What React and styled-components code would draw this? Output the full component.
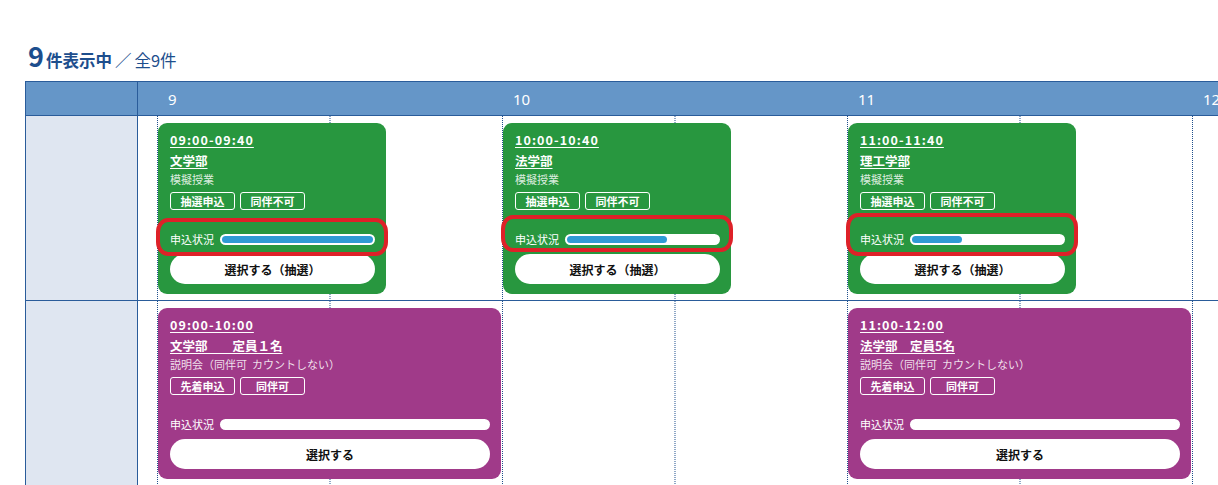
import React from 'react'
import styled, { createGlobalStyle } from 'styled-components'

const NAVY = '#2a5c9a'
const SLOT = 57.5 // 10 minutes

const GlobalStyle = createGlobalStyle`
  body {
    margin: 0;
    background: #fff;
    font-family: "Noto Sans CJK JP", "Noto Sans", sans-serif;
    overflow: hidden;
  }
`

const Page = styled.div`
  padding: 39px 0 0 25px;
`

const Title = styled.h2`
  margin: 0 0 4px 3px;
  color: #1d4e8d;
  font-weight: 400;
  font-size: 16.5px;
  line-height: 33px;
  display: flex;
  align-items: baseline;
`
const Count = styled.span`
  font-size: 27px;
  font-weight: 700;
  margin-right: 2px;
`
const Bold = styled.span`
  font-weight: 700;
`
const Slash = styled.span`
  margin: 0 3px 0 3px;
`

const Table = styled.div`
  display: grid;
  grid-template-columns: 112px 1fr;
  border-top: 1px solid ${NAVY};
  border-left: 1px solid ${NAVY};
`

const LeftCell = styled.div`
  background: ${p => (p.$head ? '#6596c8' : '#dfe6f1')};
  border-right: 1px solid ${NAVY};
  border-bottom: 1px solid ${NAVY};
`

const HeadTimes = styled.div`
  display: flex;
  height: 33px;
  align-items: center;
  padding-left: 30px;
  background: #6596c8;
  border-bottom: 1px solid ${NAVY};
  overflow: hidden;
`
const Hour = styled.div`
  flex: 0 0 345px;
  color: #fff;
  font-family: "Noto Sans", sans-serif;
  font-size: 15px;
`

// timeline body: dotted rule every half hour, 10 minute grid underneath
const Lane = styled.div`
  display: grid;
  grid-template-columns: 19px repeat(30, ${SLOT}px);
  align-items: start;
  border-bottom: 1px solid ${NAVY};
  background-image: conic-gradient(at 1px 1px, transparent 75%, #1f4f8c 0);
  background-size: ${SLOT * 3}px 2px;
  background-position: 19px 0;
  min-height: ${p => p.$h}px;
  overflow: hidden;
`

const Card = styled.div`
  grid-row: 1;
  grid-column: ${p => p.$start} / span ${p => p.$span};
  margin: 7px 1px 6px 1px;
  background: ${p => (p.$tone === 'purple' ? '#a03a89' : '#28973f')};
  border-radius: 9px;
  padding: 7px 11px 10px 12px;
  color: #fff;
  display: flex;
  flex-direction: column;
`

const Time = styled.div`
  font-size: 12.5px;
  font-weight: 700;
  letter-spacing: 1.1px;
  line-height: 20px;
  text-decoration: underline;
  text-underline-offset: 2px;
  align-self: flex-start;
`
const Name = styled.div`
  margin-top: 1px;
  font-size: 12.5px;
  font-weight: 700;
  line-height: 20px;
  text-decoration: underline;
  text-underline-offset: 2px;
  white-space: pre;
  align-self: flex-start;
`
const Kind = styled.div`
  font-size: 11px;
  line-height: 16px;
  color: rgba(255, 255, 255, 0.85);
  white-space: pre;
`
const Tags = styled.div`
  display: flex;
  gap: 5px;
  margin-top: 5px;
`
const Tag = styled.span`
  width: 65px;
  height: 18px;
  box-sizing: border-box;
  border: 1px solid #fff;
  border-radius: 3px;
  font-size: 11px;
  font-weight: 700;
  line-height: 16px;
  text-align: center;
`

const Status = styled.div`
  position: relative;
  margin-top: 22px;
  height: 14px;
  display: flex;
  align-items: center;
  gap: 6px;
  font-size: 11px;
`
const Mark = styled.span`
  position: absolute;
  top: ${p => p.$top}px;
  bottom: ${p => p.$bottom}px;
  left: -14px;
  right: -13px;
  border: 4px solid #de2128;
  border-radius: 12px / 14px;
  pointer-events: none;
`
const Track = styled.div`
  flex: 1;
  height: 11px;
  box-sizing: border-box;
  padding: 2px;
  background: #fff;
  border-radius: 6px;
`
const Fill = styled.div`
  height: 100%;
  background: #2f9bd5;
  border-radius: 4px;
`

const Pick = styled.button`
  margin-top: 8px;
  height: 30px;
  border: none;
  border-radius: 15px;
  background: #fff;
  color: #111;
  font-family: inherit;
  font-size: 12px;
  font-weight: 700;
`

const events = [
  [
    { start: 2, span: 4, tone: 'green', time: '09:00-09:40', name: '文学部', kind: '模擬授業', tags: ['抽選申込', '同伴不可'], rate: 100, action: '選択する（抽選）', mark: [-14, -10] },
    { start: 8, span: 4, tone: 'green', time: '10:00-10:40', name: '法学部', kind: '模擬授業', tags: ['抽選申込', '同伴不可'], rate: 66, action: '選択する（抽選）', mark: [-17, -6] },
    { start: 14, span: 4, tone: 'green', time: '11:00-11:40', name: '理工学部', kind: '模擬授業', tags: ['抽選申込', '同伴不可'], rate: 33, action: '選択する（抽選）', mark: [-19, -10] }
  ],
  [
    { start: 2, span: 6, tone: 'purple', time: '09:00-10:00', name: '文学部　　定員１名', kind: '説明会（同伴可  カウントしない）', tags: ['先着申込', '同伴可'], rate: 0, action: '選択する' },
    { start: 14, span: 6, tone: 'purple', time: '11:00-12:00', name: '法学部　定員5名', kind: '説明会（同伴可  カウントしない）', tags: ['先着申込', '同伴可'], rate: 0, action: '選択する' }
  ]
]

const EventCard = ({ ev }) => (
  <Card $start={ev.start} $span={ev.span} $tone={ev.tone}>
    <Time>{ev.time}</Time>
    <Name>{ev.name}</Name>
    <Kind>{ev.kind}</Kind>
    <Tags>
      {ev.tags.map(t => <Tag key={t}>{t}</Tag>)}
    </Tags>
    <Status>
      申込状況
      <Track>
        {ev.rate > 0 && <Fill style={{ width: `${ev.rate}%` }} />}
      </Track>
      {ev.mark && <Mark $top={ev.mark[0]} $bottom={ev.mark[1]} />}
    </Status>
    <Pick>{ev.action}</Pick>
  </Card>
)

export default function App () {
  return (
    <Page>
      <GlobalStyle />
      <Title>
        <Count>9</Count>
        <Bold>件表示中</Bold>
        <Slash>／</Slash>
        全9件
      </Title>
      <Table>
        <LeftCell $head />
        <HeadTimes>
          {[9, 10, 11, 12, 13].map(h => <Hour key={h}>{h}</Hour>)}
        </HeadTimes>
        {events.map((row, i) => (
          <React.Fragment key={i}>
            <LeftCell />
            <Lane $h={184}>
              {row.map(ev => <EventCard key={ev.time} ev={ev} />)}
            </Lane>
          </React.Fragment>
        ))}
      </Table>
    </Page>
  )
}
